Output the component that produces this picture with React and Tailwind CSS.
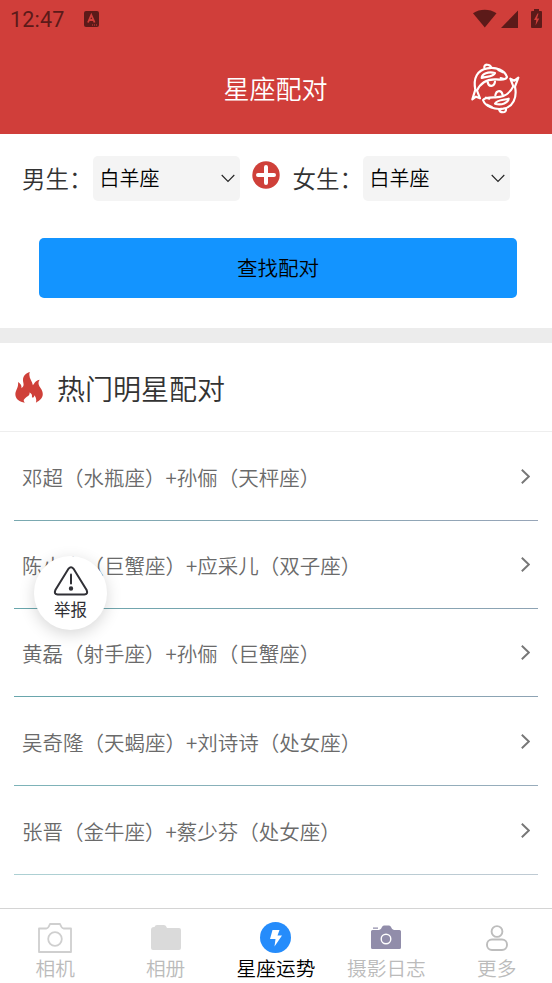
import clsx from "clsx";

const couples = [
  { id: 1, text: "邓超（水瓶座）+孙俪（天枰座）", height: "h-[89px]", line: "from-[#79a9b0] to-[#97a5b8]" },
  { id: 2, text: "陈小春（巨蟹座）+应采儿（双子座）", height: "h-[88px]", line: "from-[#68a6ac] to-[#8ea3b4]" },
  { id: 3, text: "黄磊（射手座）+孙俪（巨蟹座）", height: "h-[88px]", line: "from-[#68a6ac] to-[#8ea3b4]" },
  { id: 4, text: "吴奇隆（天蝎座）+刘诗诗（处女座）", height: "h-[89px]", line: "from-[#7db3b8] to-[#98acbb]" },
  { id: 5, text: "张晋（金牛座）+蔡少芬（处女座）", height: "h-[89px]", line: "from-[#acd0d3] to-[#bfcad3]" },
];

const StatusBar = () => (
  <div className="flex h-[38px] items-center pl-[10px] pr-[9px] text-[#5c1a19]">
    <span className="w-[74px] pt-px font-[Roboto] text-[21.5px] font-normal leading-none tracking-[0.2px]">12:47</span>
    <svg width="15" height="16" viewBox="0 0 15 16">
      <rect width="15" height="16" rx="2" fill="currentColor" />
      <path d="M4 11.5 7.3 4 10.6 11.5M5.2 9h4.2" fill="none" stroke="#d03e3a" strokeWidth="1.8" />
      <path d="M8 14h1M10 14h1M12 14h1" stroke="#d03e3a" />
    </svg>
    <svg className="ml-auto" width="70" height="20" viewBox="0 0 70 20" fill="currentColor">
      <path d="M0 4.2C7-.4 16.500-.4 23.500 4.200L11.800 18.500Z" />
      <path d="M45 1.500V19H28Z" />
      <path d="M61 0h5v2h2a1 1 0 0 1 1 1v15a1 1 0 0 1-1 1h-9a1 1 0 0 1-1-1V3a1 1 0 0 1 1-1h2Z" />
      <path d="M64.500 4.500 61 11h2.300l-.8 5.500L66.300 9.500H64l1.500-5Z" fill="#d03e3a" />
    </svg>
  </div>
);

const FishIcon = () => (
  <svg
    width="49"
    height="52"
    viewBox="59 190 147 156"
    fill="none"
    stroke="white"
    strokeWidth="6.5"
    strokeLinecap="round"
    strokeLinejoin="round"
  >
    {/* upper fish */}
    <path d="M72 270C65 235 78 211 108 206C135 201 160 212 167 232C164 242 148 240 130 239C103 239 87 250 77 273L86 296L74 291L63 299Z" />
    <path d="M99 204C97 192 117 192 120 205" />
    <path d="M91 235C92 222 110 215 131 220C126 232 107 230 91 235Z" />
    <path d="M109 247C111 263 129 262 131 246" />
    <path d="M141 211l14 7M148 235l10 3" />
    {/* lower fish */}
    <path d="M191 261C198 295 185 322 156 327C129 331 102 321 95 301C101 292 116 293 133 293C160 292 175 283 186 260L177 237L189 243L201 234Z" />
    <path d="M164 328C166 341 145 341 143 328" />
    <path d="M172 297C171 309 151 318 131 312C137 300 155 302 172 297Z" />
    <path d="M154 286C151 270 135 271 132 287" />
    <path d="M121 322l-14-7M114 297l-10-3" />
  </svg>
);

const SignSelect = () => (
  <div className="flex h-[45px] w-[147px] items-center justify-between rounded-[5px] bg-[#f4f4f4] pl-[7px] pr-[5px] text-[20px] text-black">
    <span className="pb-[2px]">白羊座</span>
    <svg width="14" height="9" viewBox="0 0 14 9" fill="none" stroke="#222" strokeWidth="1.1">
      <path d="M.7 1 7 7.500 13.300 1" />
    </svg>
  </div>
);

const FlameIcon = () => (
  <svg width="28" height="31" viewBox="44 126 83 92" fill="#cf4039">
    <path d="M88 126C82 141 95 151 97 165C102 161 101 153 117 149C109 161 117 169 123 179C132 196 122 210 106 217C109 207 105 201 102 195C100 202 98 203 94 201C96 192 91 189 87 187C89 197 78 199 72 206C68 210 70 214 73 217C58 215 45 207 45 192C45 181 55 173 53 156C62 161 64 168 63 174C71 168 70 163 68 154C66 140 74 130 88 126Z" />
  </svg>
);

const ReportButton = () => (
  <button className="absolute left-[34px] top-[556px] flex h-[74px] w-[73px] flex-col items-center rounded-full bg-white pt-[10px] text-[#303036] shadow-[0_4px_16px_rgba(0,0,0,0.16)]">
    <svg width="36" height="30" viewBox="0 0 36 30" fill="none" stroke="currentColor" strokeWidth="2" strokeLinecap="round">
      <path d="M15.600 2.600Q18-.3 20.400 2.600L33.600 24Q35.400 28.200 31.300 28.500H4.700Q.6 28.200 2.400 24Z" />
      <path d="M18 8.500v9" />
      <circle cx="18" cy="22.500" r="1.200" fill="currentColor" />
    </svg>
    <span className="mt-[2px] text-[16.5px] font-normal leading-[22px]">举报</span>
  </button>
);

const tabs = [
  {
    name: "相机",
    icon: (
      <svg width="34" height="30" viewBox="0 0 34 30" fill="none" stroke="#cfcfcf" strokeWidth="1.8" strokeLinejoin="round">
        <path d="M1 5.500H8.500Q10.500 5 12 1H22Q23.500 5 25.500 5.500H33V29H1Z" />
        <circle cx="17" cy="16" r="6.800" />
      </svg>
    ),
  },
  {
    name: "相册",
    icon: (
      <svg width="30" height="26" viewBox="0 0 30 26" fill="#dadada">
        <path d="M3 2H3.500Q4 0 6 0h7q2 0 3 3H28Q30 3 30 5V23Q30 25 28 25H2Q0 25 0 23V5Q0 2 3 2Z" />
      </svg>
    ),
  },
  {
    name: "星座运势",
    active: true,
    icon: (
      <svg width="31" height="31" viewBox="0 0 31 31">
        <circle cx="15.500" cy="15.500" r="15.500" fill="#258cfb" />
        <path d="M12.500 8h7l-2 5.500h4.500L14.500 24.500l1-7.500H10Z" fill="white" />
      </svg>
    ),
  },
  {
    name: "摄影日志",
    icon: (
      <svg width="30" height="25" viewBox="0 0 30 25" fill="#918daa">
        <path d="M2 2.500h5v1.300H2zM1.500 5H8Q10 5 11 2Q11.500 .5 13 .5H18Q19.500.5 20 2Q21 5 23 5H28.500Q30 5 30 6.500V22.500Q30 24 28.500 24H1.500Q0 24 0 22.500V6.500Q0 5 1.500 5Z" />
        <circle cx="15" cy="14" r="4.800" fill="none" stroke="white" strokeWidth="1.400" />
      </svg>
    ),
  },
  {
    name: "更多",
    icon: (
      <svg width="22" height="26" viewBox="0 0 22 26" fill="none" stroke="#bdbdbd" strokeWidth="1.900">
        <circle cx="11" cy="6.500" r="5.400" />
        <rect x="1" y="14.500" width="20" height="10.500" rx="5" />
      </svg>
    ),
  },
];

const App = () => {
  return (
    <div className="relative flex h-[983px] w-[552px] flex-col overflow-hidden bg-white font-['Noto_Sans_CJK_SC',sans-serif] font-[350] text-[#333]">
      <header className="h-[134px] shrink-0 bg-[#d03e3a]">
        <StatusBar />
        <div className="grid h-[96px] grid-cols-[1fr_auto_1fr] items-center pr-[32px]">
          <h1 className="col-start-2 pl-[31px] pt-[3px] text-[26px] leading-[36px] text-white">星座配对</h1>
          <div className="flex justify-end pt-[6px]">
            <FishIcon />
          </div>
        </div>
      </header>

      <section className="h-[194px] shrink-0 pt-[22px]">
        <div className="flex h-[45px] items-center pl-[22px] text-[23.5px]">
          <span className="w-[70.5px] whitespace-nowrap pt-px">男生：</span>
          <SignSelect />
          <svg className="mx-[12.5px] mb-[7px]" width="28" height="28" viewBox="0 0 28 28">
            <circle cx="14" cy="14" r="13.700" fill="#cf4039" />
            <path d="M14 6v16M6 14h16" stroke="white" strokeWidth="4" strokeLinecap="round" />
          </svg>
          <span className="w-[70px] whitespace-nowrap pt-px">女生：</span>
          <SignSelect />
        </div>
        <button className="ml-[39px] mt-[37px] block h-[60px] w-[478px] rounded-[5px] bg-[#1394ff] pb-[2px] text-[20.5px] text-black">
          查找配对
        </button>
      </section>

      <div className="h-[15px] shrink-0 bg-[#ececec]" />

      <main className="flex-1">
        <h2 className="flex h-[89px] items-center gap-[14px] border-b border-[#eee] pl-[15px] text-[28px]">
          <FlameIcon />
          <span className="pt-px">热门明星配对</span>
        </h2>
        <ul className="px-[14px] text-[20.5px] text-[#6a6a6a]">
          {couples.map((item) => (
            <li key={item.id} className={clsx("flex flex-col", item.height)}>
              <div className="flex flex-1 items-center justify-between pl-[8px] pr-[8px]">
                <span className="pt-[2px]">{item.text}</span>
                <svg width="9" height="15" viewBox="0 0 9 15" fill="none" stroke="#777" strokeWidth="1.900">
                  <path d="M.8.8 7.800 7.500.8 14.200" />
                </svg>
              </div>
              <div className={clsx("h-px bg-linear-to-r", item.line)} />
            </li>
          ))}
        </ul>
      </main>

      <nav className="grid h-[75px] shrink-0 grid-cols-5 border-t border-[#d4d4d4]">
        {tabs.map((tab) => (
          <div
            key={tab.name}
            className={clsx("flex flex-col items-center text-[19.7px] leading-[28px]", tab.active ? "text-black" : "text-[#bbb]")}
          >
            <div className="flex h-[45px] items-center pt-[12px]">{tab.icon}</div>
            <span>{tab.name}</span>
          </div>
        ))}
      </nav>

      <ReportButton />
    </div>
  );
};

export default App;
